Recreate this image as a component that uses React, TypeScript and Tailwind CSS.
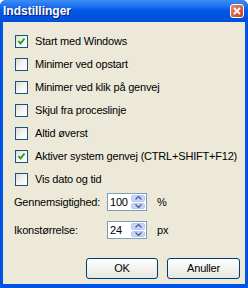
import React from 'react';

const font = { fontFamily: '"Liberation Sans", Arial, sans-serif' };

const options = [
  { label: 'Start med Windows', checked: true },
  { label: 'Minimer ved opstart', checked: false },
  { label: 'Minimer ved klik på genvej', checked: false },
  { label: 'Skjul fra proceslinje', checked: false },
  { label: 'Altid øverst', checked: false },
  { label: 'Aktiver system genvej (CTRL+SHIFT+F12)', checked: true },
  { label: 'Vis dato og tid', checked: false },
];

const CheckBox: React.FC<{ checked: boolean }> = ({ checked }) => (
  <span className="w-[13px] h-[13px] border border-[#1c5180] bg-gradient-to-br from-[#dcdcd7] via-[#f4f4f0] to-[#ffffff] flex items-center justify-center shrink-0">
    {checked && (
      <svg width="9" height="9" viewBox="0 0 9 9">
        <path d="M1.5 4 L3.5 6.5 L7.5 1.5" stroke="#21a121" strokeWidth="2" fill="none" />
      </svg>
    )}
  </span>
);

const SpinBox: React.FC<{ value: string }> = ({ value }) => (
  <div className="w-[40px] h-[18px] border border-[#7f9db9] bg-white flex items-stretch">
    <span className="flex-1 pl-[2px] text-[11px] leading-[16px] text-black">{value}</span>
    <div className="w-[15px] flex flex-col gap-[1px] p-[1px] pl-0">
      <span className="flex-1 rounded-[2px] bg-[#c5d5fc] border border-[#b4c8f6] flex items-center justify-center">
        <svg width="7" height="4" viewBox="0 0 7 4">
          <path d="M0.5 3.5 L3.5 0.5 L6.5 3.5" stroke="#4d6185" strokeWidth="1.4" fill="none" />
        </svg>
      </span>
      <span className="flex-1 rounded-[2px] bg-[#c5d5fc] border border-[#b4c8f6] flex items-center justify-center">
        <svg width="7" height="4" viewBox="0 0 7 4">
          <path d="M0.5 0.5 L3.5 3.5 L6.5 0.5" stroke="#4d6185" strokeWidth="1.4" fill="none" />
        </svg>
      </span>
    </div>
  </div>
);

const XpButton: React.FC<{ children: React.ReactNode; width: string }> = ({ children, width }) => (
  <button
    className={`${width} h-[21px] rounded-[3px] border border-[#003c74] bg-gradient-to-b from-[#ffffff] to-[#e6e5de] text-[11px] tracking-[-0.2px] text-black flex items-center justify-center`}
  >
    {children}
  </button>
);

export default function App() {
  return (
    <div className="w-[248px] h-[288px] flex flex-col bg-[#0054e3] rounded-t-[6px] overflow-hidden" style={font}>
      {/* title bar */}
      <div className="h-[22px] flex items-center justify-between pl-[3px] pr-[4px] bg-gradient-to-b from-[#3d8df5] via-[#0058e6] to-[#0050d8]">
        <span className="text-white font-bold text-[12px] [text-shadow:1px_1px_0_#0a1e7a]">Indstillinger</span>
        <span className="w-[14px] h-[14px] rounded-[3px] border border-white bg-gradient-to-br from-[#e98a6d] to-[#c8391b] flex items-center justify-center">
          <svg width="8" height="8" viewBox="0 0 8 8">
            <path d="M1 1 L7 7 M7 1 L1 7" stroke="white" strokeWidth="1.8" />
          </svg>
        </span>
      </div>

      {/* body */}
      <div className="flex-1 mx-[3px] mb-[4px] bg-[#ece9d8] flex flex-col pt-[8px] tracking-[-0.2px]">
        <div className="flex flex-col pl-[12px]">
          {options.map((o) => (
            <label key={o.label} className="h-[23px] flex items-center gap-[7px] text-[11px] text-black">
              <CheckBox checked={o.checked} />
              <span>{o.label}</span>
            </label>
          ))}
        </div>

        <div className="flex flex-col gap-[8px] mt-[1px] pl-[11px] text-[11px] text-black">
          <div className="h-[20px] flex items-center">
            <span className="w-[93px]">Gennemsigtighed:</span>
            <SpinBox value="100" />
            <span className="ml-[10px]">%</span>
          </div>
          <div className="h-[20px] flex items-center">
            <span className="w-[93px]">Ikonstørrelse:</span>
            <SpinBox value="24" />
            <span className="ml-[10px]">px</span>
          </div>
        </div>

        <div className="mt-auto flex justify-end gap-[9px] pr-[5px] pb-[5px]">
          <XpButton width="w-[72px]">OK</XpButton>
          <XpButton width="w-[73px]">Anuller</XpButton>
        </div>
      </div>
    </div>
  );
}
